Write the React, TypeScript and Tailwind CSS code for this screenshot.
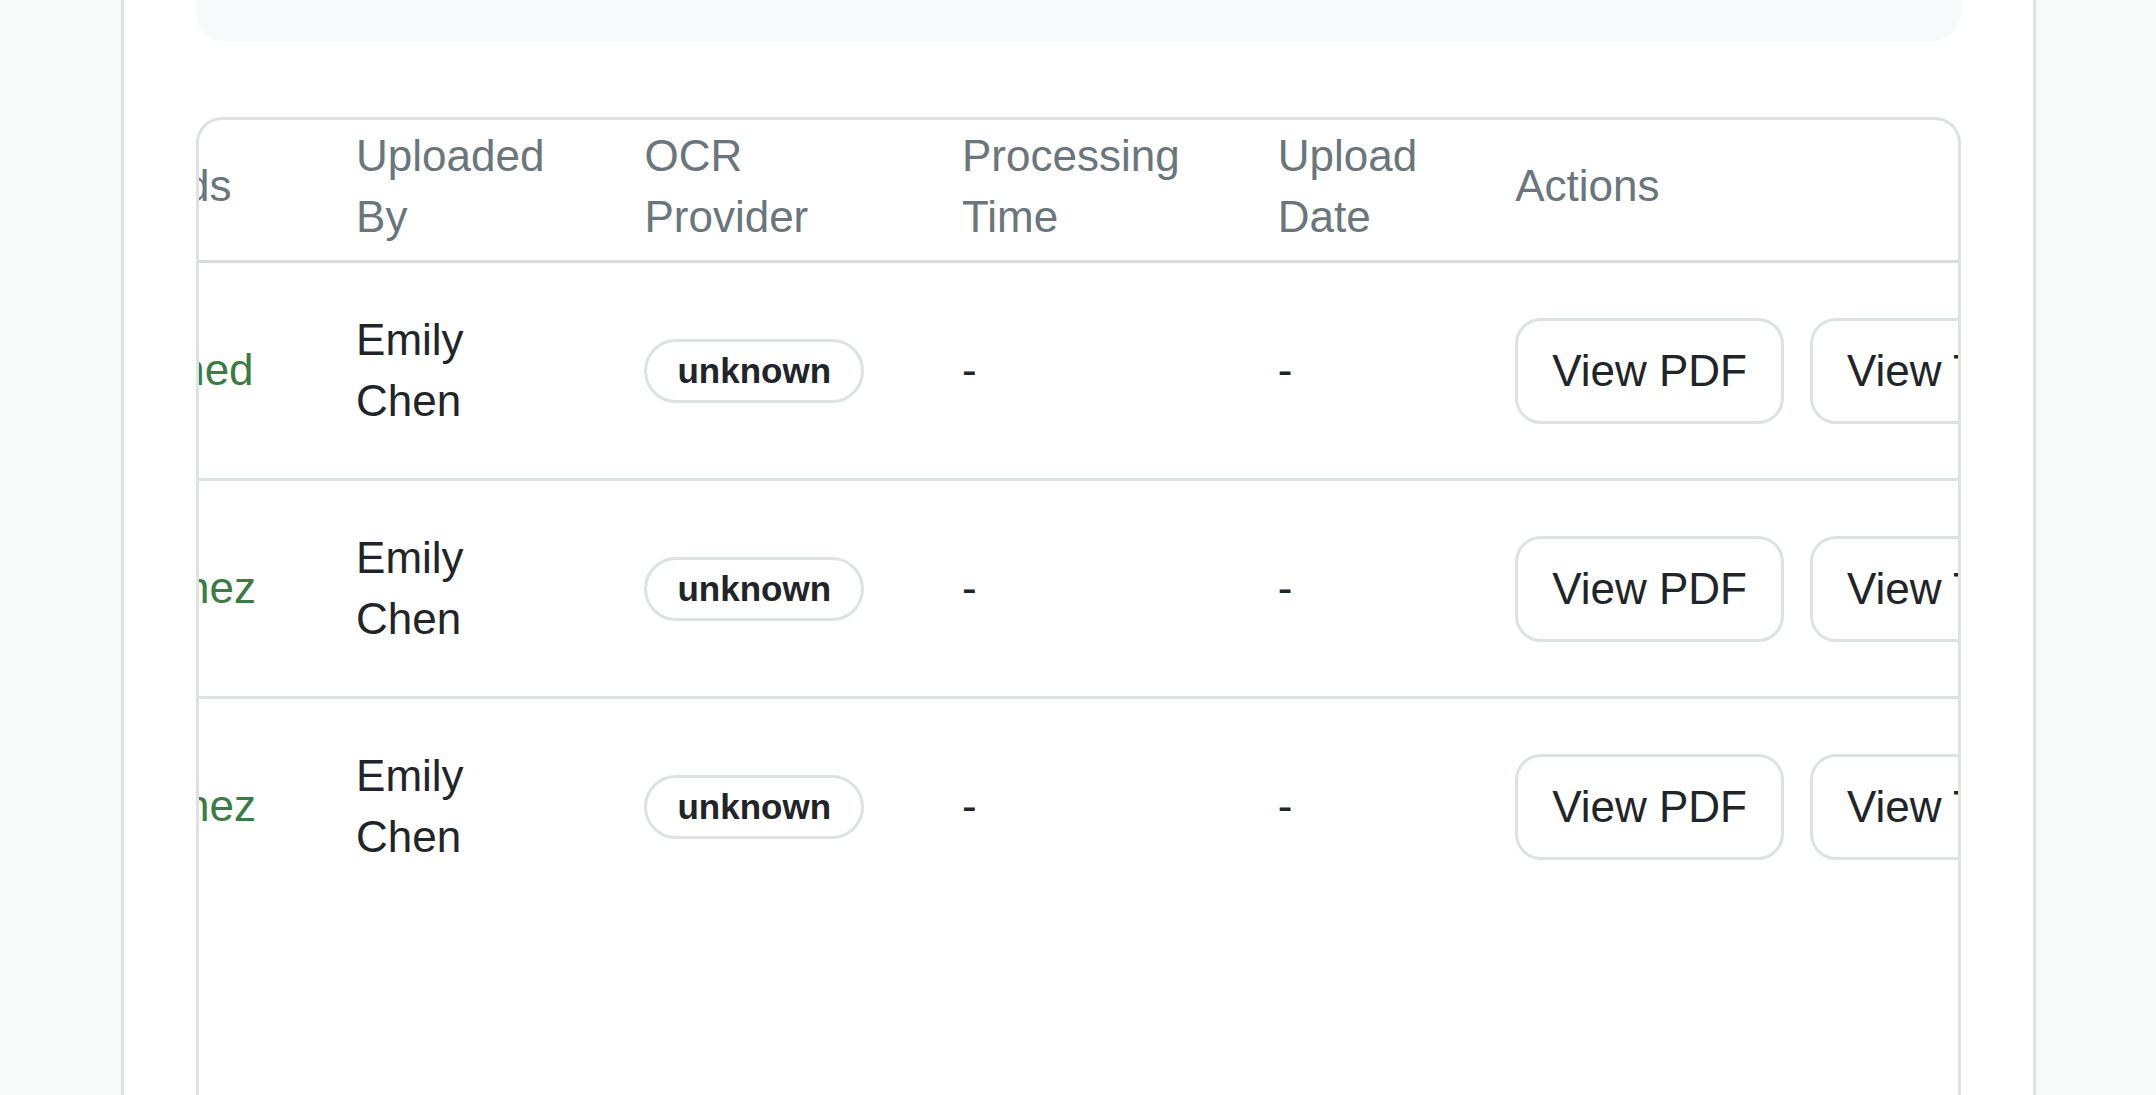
import React, { useLayoutEffect, useRef } from 'react';

interface DocumentRow {
  id: number;
  fileName: string;
  status: string;
  assignee: string;
  uploadedBy: string;
  provider: string;
  processingTime: string;
  uploadDate: string;
}

const documents: DocumentRow[] = [
  {
    id: 1,
    fileName: 'transcript_2024.pdf',
    status: 'Processed',
    assignee: 'Designed',
    uploadedBy: 'Emily Chen',
    provider: 'unknown',
    processingTime: '-',
    uploadDate: '-',
  },
  {
    id: 2,
    fileName: 'enrollment_form.pdf',
    status: 'Processed',
    assignee: 'Quiñonez',
    uploadedBy: 'Emily Chen',
    provider: 'unknown',
    processingTime: '-',
    uploadDate: '-',
  },
  {
    id: 3,
    fileName: 'report_card.pdf',
    status: 'Processed',
    assignee: 'Quiñonez',
    uploadedBy: 'Emily Chen',
    provider: 'unknown',
    processingTime: '-',
    uploadDate: '-',
  },
];

const headers = ['OCR Provider', 'Processing Time', 'Upload Date', 'Actions'];

const App: React.FC = () => {
  const scrollRef = useRef<HTMLDivElement>(null);
  const anchorRef = useRef<HTMLTableCellElement>(null);

  useLayoutEffect(() => {
    // table is scrolled sideways: "Uploaded By" column starts at x=308
    const align = () => {
      const box = scrollRef.current;
      const th = anchorRef.current;
      if (!box || !th) return;
      box.scrollLeft += th.getBoundingClientRect().left - 308;
    };
    align();
    document.fonts?.ready.then(align);
  }, []);

  return (
    <div className="min-h-screen bg-[#f8f9f9] flex justify-center font-['Liberation_Sans',Arial,sans-serif] text-[44px] leading-[1.375] text-[#212529]">
      <div className="w-[1915px] bg-white border-x-[3px] border-[#dee3e2] px-[72px]">
        {/* filter panel, mostly scrolled out of view */}
        <div className="h-[41px] rounded-b-[28px] bg-[#f8f9fa]" />

        <div
          ref={scrollRef}
          className="mt-[76px] h-[1100px] overflow-hidden rounded-t-[26px] border-[3px] border-b-0 border-[#dee3e2]"
        >
          <table className="w-full">
            <thead>
              <tr className="border-b-[3px] border-[#d6dddc]">
                <th className="pl-[48px] pr-[52px] pt-[6px] pb-[13px] text-left font-normal text-[#6a757c]">File Name</th>
                <th className="pl-[48px] pr-[52px] pt-[6px] pb-[13px] text-left font-normal text-[#6a757c]">Status</th>
                <th className="pl-[48px] pr-[52px] pt-[6px] pb-[13px] text-left font-normal text-[#6a757c]">Records</th>
                <th ref={anchorRef} className="pl-[48px] pr-[52px] pt-[6px] pb-[13px] text-left font-normal text-[#6a757c]">
                  Uploaded By
                </th>
                {headers.map((h) => (
                  <th key={h} className="pl-[48px] pr-[50px] pt-[6px] pb-[13px] text-left font-normal text-[#6a757c]">
                    {h}
                  </th>
                ))}
              </tr>
            </thead>
            <tbody>
              {documents.map((doc) => (
                <tr key={doc.id} className="border-b-[3px] border-[#dee3e2] last:border-b-0">
                  <td className="pl-[48px] pr-[52px] py-[47px] align-middle">{doc.fileName}</td>
                  <td className="pl-[48px] pr-[52px] py-[47px] align-middle">{doc.status}</td>
                  <td className="pl-[48px] pr-[52px] py-[47px] align-middle text-[#3a7d44]">{doc.assignee}</td>
                  <td className="pl-[48px] pr-[52px] py-[47px] align-middle">{doc.uploadedBy}</td>
                  <td className="pl-[48px] pr-[50px] py-[47px] align-middle">
                    <span className="inline-block whitespace-nowrap rounded-full border-[3px] border-[#dee3e2] px-[30px] py-[3px] text-[35px] leading-[52px] font-bold">
                      {doc.provider}
                    </span>
                  </td>
                  <td className="pl-[48px] pr-[50px] py-[47px] align-middle">{doc.processingTime}</td>
                  <td className="pl-[48px] pr-[50px] py-[47px] align-middle">{doc.uploadDate}</td>
                  <td className="pl-[48px] pr-[50px] py-[47px] align-middle">
                    <div className="flex gap-[26px] whitespace-nowrap">
                      <button className="rounded-[26px] border-[3px] border-[#dee3e2] bg-white px-[34px] py-[20px] leading-[60px]">
                        View PDF
                      </button>
                      <button className="rounded-[26px] border-[3px] border-[#dee3e2] bg-white px-[34px] py-[20px] leading-[60px]">
                        View Text
                      </button>
                      <button className="rounded-[26px] border-[3px] border-[#dee3e2] bg-white px-[34px] py-[20px] leading-[60px]">
                        Delete
                      </button>
                    </div>
                  </td>
                </tr>
              ))}
            </tbody>
          </table>
        </div>
      </div>
    </div>
  );
};

export default App;
